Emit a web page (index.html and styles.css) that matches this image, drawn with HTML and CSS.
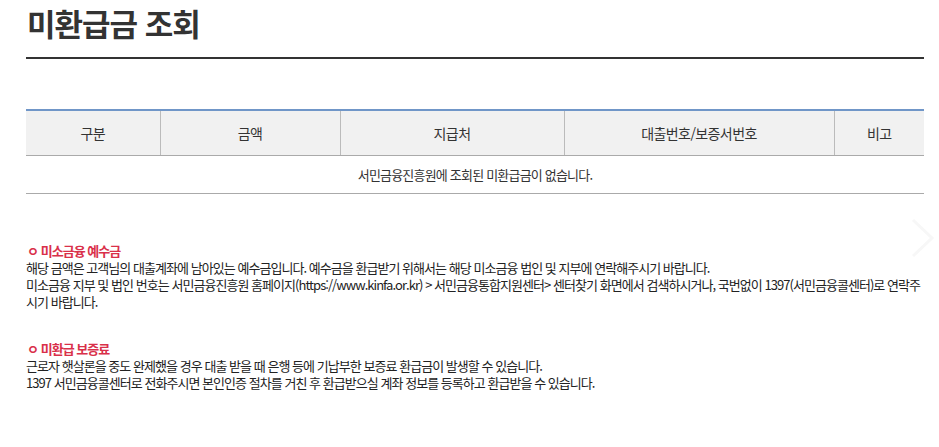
FILE: index.html
```html
<!DOCTYPE html>
<html lang="ko">
<head>
<meta charset="utf-8">
<link rel="stylesheet" href="styles.css">
</head>
<body>
<div class="page">
  <h1 class="title">미환급금 조회</h1>
  <table class="grid">
    <colgroup>
      <col class="c1"><col class="c2"><col class="c3"><col class="c4"><col class="c5">
    </colgroup>
    <thead>
      <tr><th>구분</th><th>금액</th><th>지급처</th><th>대출번호/보증서번호</th><th>비고</th></tr>
    </thead>
    <tbody>
      <tr><td colspan="5">서민금융진흥원에 조회된 미환급금이 없습니다.</td></tr>
    </tbody>
  </table>
  <div class="note">
    <p class="note-title">ㅇ 미소금융 예수금</p>
    <p>해당 금액은 고객님의 대출계좌에 남아있는 예수금입니다. 예수금을 환급받기 위해서는 해당 미소금융 법인 및 지부에 연락해주시기 바랍니다.</p>
    <p>미소금융 지부 및 법인 번호는 서민금융진흥원 홈페이지(https://www.kinfa.or.kr) &gt; 서민금융통합지원센터&gt; 센터찾기 화면에서 검색하시거나, 국번없이 1397(서민금융콜센터)로 연락주시기 바랍니다.</p>
  </div>
  <div class="note">
    <p class="note-title">ㅇ 미환급 보증료</p>
    <p>근로자 햇살론을 중도 완제했을 경우 대출 받을 때 은행 등에 기납부한 보증료 환급금이 발생할 수 있습니다.</p>
    <p>1397 서민금융콜센터로 전화주시면 본인인증 절차를 거친 후 환급받으실 계좌 정보를 등록하고 환급받을 수 있습니다.</p>
  </div>
</div>
<svg class="chev" width="24" height="40" viewBox="0 0 24 40"><path d="M2 2 L21 20 L2 38" fill="none" stroke="#f7f7f7" stroke-width="3"/></svg>
</body>
</html>
```
FILE: styles.css
```css
html, body { margin: 0; padding: 0; background: #fff; }
body {
  font-family: "Noto Sans CJK KR", "Noto Sans", sans-serif;
  color: #333;
}
.page { padding: 0 15px 0 26px; width: 898px; }
.title {
  margin: 0;
  padding-top: 1px;
  font-size: 31px;
  font-weight: 700;
  line-height: 44px;
  letter-spacing: -1px;
  color: #333;
  height: 56px;
  border-bottom: 2px solid #333;
  box-sizing: content-box;
  padding-left: 1px;
}
.grid {
  margin-top: 50px;
  width: 898px;
  border-collapse: collapse;
  border-top: 2px solid #7096c8;
  table-layout: fixed;
}
.c1 { width: 134px; } .c2 { width: 180px; } .c3 { width: 224px; } .c4 { width: 270px; } .c5 { width: 90px; }
.grid th {
  background: #f1f1f1;
  height: 44px;
  padding: 0;
  font-size: 14px;
  font-weight: 400;
  letter-spacing: -0.6px;
  color: #333;
  border-left: 1px solid #bbb;
  border-bottom: 1px solid #aaa;
}
.grid th:first-child { border-left: none; }
.grid td {
  height: 37px;
  padding: 0;
  text-align: center;
  font-size: 13px;
  letter-spacing: -0.8px;
  color: #333;
  border-bottom: 1px solid #aaa;
}
.note { margin-top: 48px; }
.note + .note { margin-top: 30px; }
.note p {
  margin: 0;
  font-size: 13px;
  line-height: 17px;
  letter-spacing: -0.96px;
  color: #222;
}
.note .note-title { color: #d9304a; font-weight: 700; padding-left: 1px; }
.chev { position: absolute; left: 911px; top: 218px; }
```
